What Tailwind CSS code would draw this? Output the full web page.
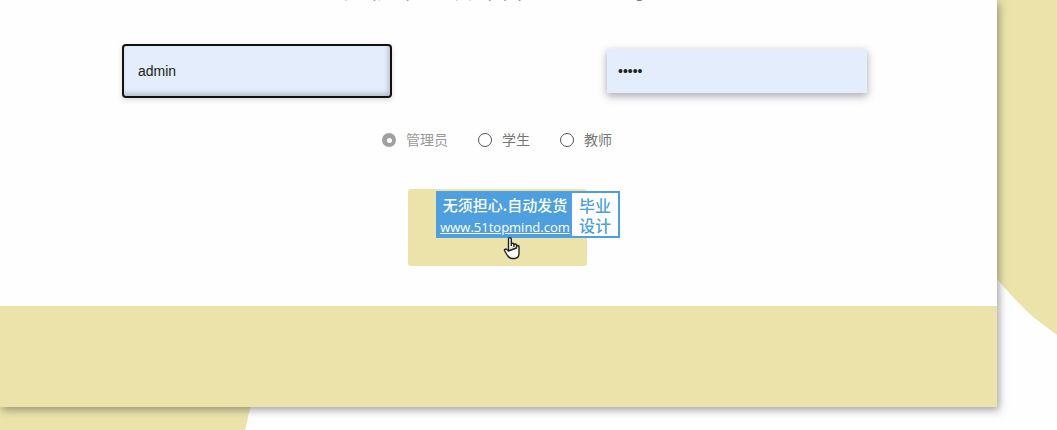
<!DOCTYPE html>
<html lang="zh">
<head>
    <meta charset="UTF-8">
    <title>登录</title>
    <script src="https://cdn.jsdelivr.net/npm/@tailwindcss/browser@4"></script>
</head>
<body class="relative w-[1057px] h-[430px] overflow-hidden bg-[#fefefe] font-['Liberation_Sans','Noto_Sans_CJK_SC',sans-serif]">
    <!-- 背景色块 -->
    <svg class="absolute inset-0" width="1057" height="430" viewBox="0 0 1057 430">
        <path d="M990 0H1057V335L1033 317Q1010 296 990 270Z" fill="#ebe3a9"/>
        <path d="M0 400H252L245 430H0Z" fill="#ebe3a9"/>
    </svg>

    <div class="relative w-[997px] h-[407px] bg-[#fefefe] shadow-[2px_3px_8px_rgba(70,70,70,0.5)] flex flex-col">
        <!-- 登录表单 -->
        <div class="h-[306px] flex flex-col">
            <h1 class="h-[3px] overflow-hidden text-center text-[#555] text-[26px] leading-[3px] [&>span]:relative [&>span]:top-[-12px]"><span>高校毕业设计管理系统登录</span></h1>

            <div class="flex justify-between pl-[122px] pr-[130px] mt-[41px]">
                <input type="text" value="admin" class="w-[270px] h-[54px] pl-[14px] rounded-[4px] border-2 border-[#111] bg-[#e3edfb] text-sm text-[#222] shadow-[inset_-2px_-3px_4px_rgba(90,90,90,0.3),0_2px_5px_rgba(60,60,70,0.2)] outline-none">
                <input type="password" value="12345" class="w-[260px] h-[44px] mt-[5px] pl-[11px] bg-[#e3edfb] text-sm text-[#222] shadow-[0_3px_8px_rgba(60,60,80,0.45)] outline-none">
            </div>

            <div class="flex items-center ml-[382px] mt-[32px] text-sm text-[#777] h-[20px]">
                <span class="w-[14px] h-[14px] rounded-full bg-[#a0a0a0] flex items-center justify-center"><span class="w-[5px] h-[5px] rounded-full bg-white"></span></span>
                <span class="ml-[10px] text-[#999]">管理员</span>
                <span class="ml-[30px] w-[14px] h-[14px] rounded-full border border-[#555]"></span>
                <span class="ml-[10px]">学生</span>
                <span class="ml-[30px] w-[14px] h-[14px] rounded-full border border-[#555]"></span>
                <span class="ml-[10px]">教师</span>
            </div>

            <div class="relative ml-[408px] mt-[39px] w-[179px] h-[77px] rounded-[3px] bg-[#ebe3a9]">
                <!-- 水印 -->
                <div class="absolute left-[28px] top-[2px] w-[184px] h-[47px] flex bg-[#4d9fdf] border-2 border-[#4d9fdf]">
                    <div class="w-[134px] flex flex-col items-center text-white">
                        <span class="text-[15px] leading-[23px] font-medium font-['Noto_Sans_CJK_SC',sans-serif]">无须担心.自动发货</span>
                        <span class="text-[13px] leading-[20px] pt-[1px] font-medium underline font-['Open_Sans',sans-serif]">www.51topmind.com</span>
                    </div>
                    <div class="flex-1 bg-white text-[#4d9fdf] text-base font-medium flex flex-col items-center pt-[2px] font-['Noto_Sans_CJK_SC',sans-serif]">
                        <span class="h-[20px] leading-[20px]">毕业</span>
                        <span class="h-[20px] leading-[20px]">设计</span>
                    </div>
                </div>
                <!-- 鼠标手型 -->
                <svg class="absolute left-[95px] top-[47px]" width="18" height="24" viewBox="0 0 18 24">
                    <path d="M5.500 15V3a1.400 1.400 0 0 1 2.800 0v7M8.300 10V8.500a1.300 1.300 0 0 1 2.600 0V11M10.900 11V9.300a1.300 1.300 0 0 1 2.600 0V12M13.500 12V10.500a1.300 1.300 0 0 1 2.500 0V17c0 3-1.500 5.500-4.500 5.500H9c-2.500 0-3.500-1.500-4.500-3L1.700 15c-.8-1.300.8-2.600 2-1.500L5.500 15Z" fill="#fff" stroke="#222" stroke-width="1.400" stroke-linejoin="round"/>
                </svg>
            </div>
        </div>

        <div class="flex-1 bg-[#ebe3a9]"></div>
    </div>
</body>
</html>
